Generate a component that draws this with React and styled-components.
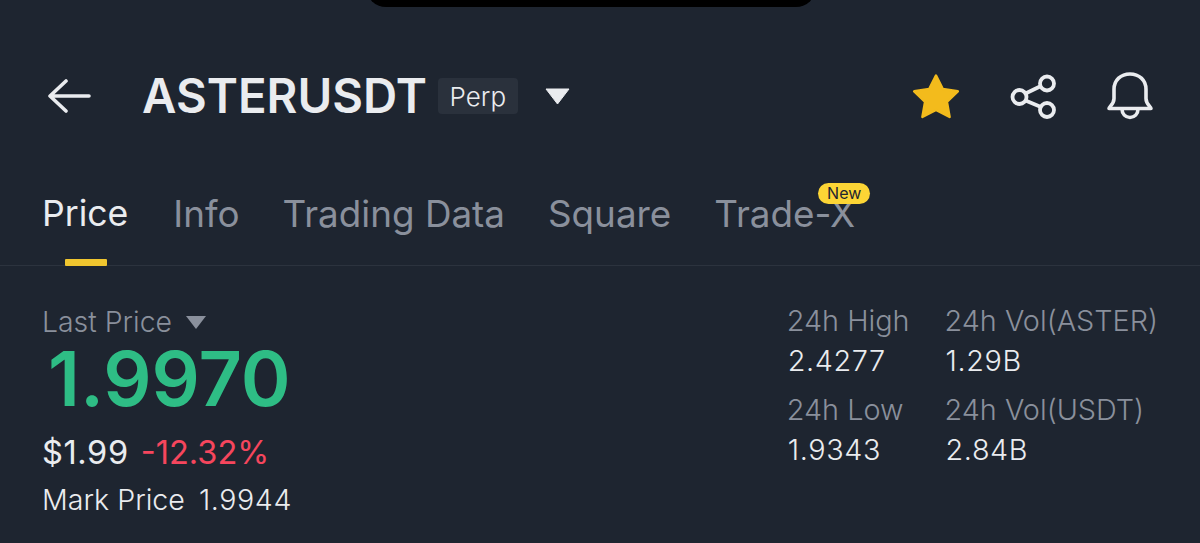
import React from "react";
import styled, { createGlobalStyle } from "styled-components";

const Global = createGlobalStyle`
  html, body { margin: 0; padding: 0; background: #1e2530; }
  body { width: 1200px; height: 543px; overflow: hidden; font-family: Inter, "Liberation Sans", sans-serif; }
`;
const Page = styled.div`
  position: relative; width: 1200px; height: 543px; background: #1e2530; overflow: hidden;
`;
const Notch = styled.div`
  position: absolute; left: 366px; top: -20px; width: 450px; height: 27px; background: #000;
  border-radius: 0 0 20px 20px;
`;
const Header = styled.header`
  display: flex; align-items: center; height: 62px; padding: 65px 46px 0 48px;
`;
const Back = styled.svg`width: 44px; height: 36px; margin-right: 50px; flex: none;`;
const Symbol = styled.h1`
  margin: 0; font-size: 47.3px; font-weight: 600; color: #eaecef; line-height: 1;
`;
const Tag = styled.span`
  margin-left: 11px; width: 80px; height: 36px; display: flex; align-items: center; justify-content: center;
  background: #2a313c; border-radius: 4px; color: #eaecef; font-size: 26px; font-weight: 300;
`;
const Caret = styled.svg`margin-left: 27px; width: 25px; height: 17px; flex: none;`;
const Actions = styled.div`margin-left: auto; display: flex; align-items: center; gap: 48px;`;
const Tabs = styled.nav`
  display: flex; gap: 43px; padding: 66px 42px 0; height: 139px; box-sizing: border-box;
  border-bottom: 1px solid #2c333e;
`;
const Tab = styled.div`
  position: relative; font-size: ${p => p.$active ? "35.6px" : "36.8px"}; line-height: 42px; height: 42px; font-weight: 400;
  margin-right: ${p => p.$active ? "2px" : "0"};
  color: ${p => p.$active ? "#eaecef" : "#8a909c"}; white-space: nowrap;
`;
const Underline = styled.i`
  position: absolute; left: 23px; top: 66px; width: 42px; height: 7px; background: #f0c62f; border-radius: 1px;
`;
const NewBadge = styled.span`
  position: absolute; right: -15px; top: -10px; width: 52px; height: 21px; border-radius: 11px;
  background: #fcd535; color: #1e2530; font-size: 16px; line-height: 21px; text-align: center; font-weight: 400;
`;
const Body = styled.section`
  display: flex; justify-content: space-between; align-items: flex-start; padding: 38px 42px 0 42px;
`;
const Left = styled.div`display: flex; flex-direction: column;`;
const LastRow = styled.div`
  display: flex; align-items: center; gap: 14px; font-size: 28.4px; line-height: 36px; color: #8a909c; font-weight: 300;
`;
const SmallCaret = styled.svg`width: 20px; height: 13px; flex: none;`;
const Price = styled.div`
  font-size: 75.6px; font-weight: 600; line-height: 56px; color: #2ebd85; margin: 11px 0 10px 6px;
`;
const SubRow = styled.div`
  display: flex; gap: 12px; font-size: 32.6px; line-height: 36px; margin-top: 17px; font-weight: 400; color: #eaecef;
`;
const UsdValue = styled.span`letter-spacing: 0.6px;`;
const Change = styled.span`color: #f6465d;`;
const MarkRow = styled.div`
  display: flex; gap: 14px; font-size: 28.6px; line-height: 34px; margin-top: 13px; color: #eaecef; font-weight: 300;
`;
const MarkValue = styled.span`letter-spacing: 0.6px;`;
const Stats = styled.div`
  display: grid; grid-template-columns: auto auto; column-gap: 35px; row-gap: 13px; margin-top: -1px;
`;
const Stat = styled.div`display: flex; flex-direction: column;`;
const StatLabel = styled.div`font-size: 28.8px; line-height: 36px; color: #8a909c; font-weight: 300; white-space: nowrap;`;
const StatValue = styled.div`font-size: 28.8px; line-height: 36px; color: #eaecef; font-weight: 300; margin: 4px 0 0 1px; letter-spacing: 0.6px;`;

const stats = [
  ["24h High", "2.4277"],
  ["24h Vol(ASTER)", "1.29B"],
  ["24h Low", "1.9343"],
  ["24h Vol(USDT)", "2.84B"],
];

export default function App() {
  return (
    <Page>
      <Global />
      <Notch />
      <Header>
        <Back viewBox="0 0 44 36" fill="none" stroke="#eaecef" strokeWidth="3.6" strokeLinecap="round" strokeLinejoin="round">
          <path d="M41 18H3M18 3L2 18l16 15" />
        </Back>
        <Symbol>ASTERUSDT</Symbol>
        <Tag>Perp</Tag>
        <Caret viewBox="0 0 25 17"><path d="M1 1h23L12.5 16z" fill="#eaecef" stroke="#eaecef" strokeWidth="1" strokeLinejoin="round" /></Caret>
        <Actions>
          <svg width="50" height="48" viewBox="0 0 50 48">
            <path d="M24 3.500l6.800 13.600 15 2.200-10.900 10.500 2.700 15.200L24 37.800l-13.600 7.200 2.700-15.200L2.200 19.300l15-2.200z" fill="#f3bb1c" stroke="#f3bb1c" strokeWidth="2.500" strokeLinejoin="round" />
          </svg>
          <svg width="48" height="48" viewBox="0 0 48 48" fill="none" stroke="#eaecef" strokeWidth="3.800">
            <circle cx="37" cy="11.500" r="7" /><circle cx="9.500" cy="25" r="7" /><circle cx="37" cy="38" r="7" />
            <path d="M15.500 21.500L31 14M15.500 28.500L31 35" />
          </svg>
          <svg width="48" height="50" viewBox="0 0 48 50" fill="none" stroke="#eaecef" strokeWidth="3.600" strokeLinejoin="round" strokeLinecap="round">
            <path d="M3 37.500c0-2 5-4 5-10v-9C8 9 15 3 24 3s16 6 16 15.500v9c0 6 5 8 5 10z" />
            <path d="M16 38c0 5 3.500 8.500 8 8.500s8-3.500 8-8.500" />
          </svg>
        </Actions>
      </Header>
      <Tabs>
        <Tab $active>Price<Underline /></Tab>
        <Tab>Info</Tab>
        <Tab>Trading Data</Tab>
        <Tab>Square</Tab>
        <Tab>Trade-X<NewBadge>New</NewBadge></Tab>
      </Tabs>
      <Body>
        <Left>
          <LastRow>Last Price
            <SmallCaret viewBox="0 0 20 13"><path d="M0 0h20L10 13z" fill="#8a909c" /></SmallCaret>
          </LastRow>
          <Price>1.9970</Price>
          <SubRow><UsdValue>$1.99</UsdValue><Change>-12.32%</Change></SubRow>
          <MarkRow><span>Mark Price</span><MarkValue>1.9944</MarkValue></MarkRow>
        </Left>
        <Stats>
          {stats.map(([l, v]) => (
            <Stat key={l}><StatLabel>{l}</StatLabel><StatValue>{v}</StatValue></Stat>
          ))}
        </Stats>
      </Body>
    </Page>
  );
}
